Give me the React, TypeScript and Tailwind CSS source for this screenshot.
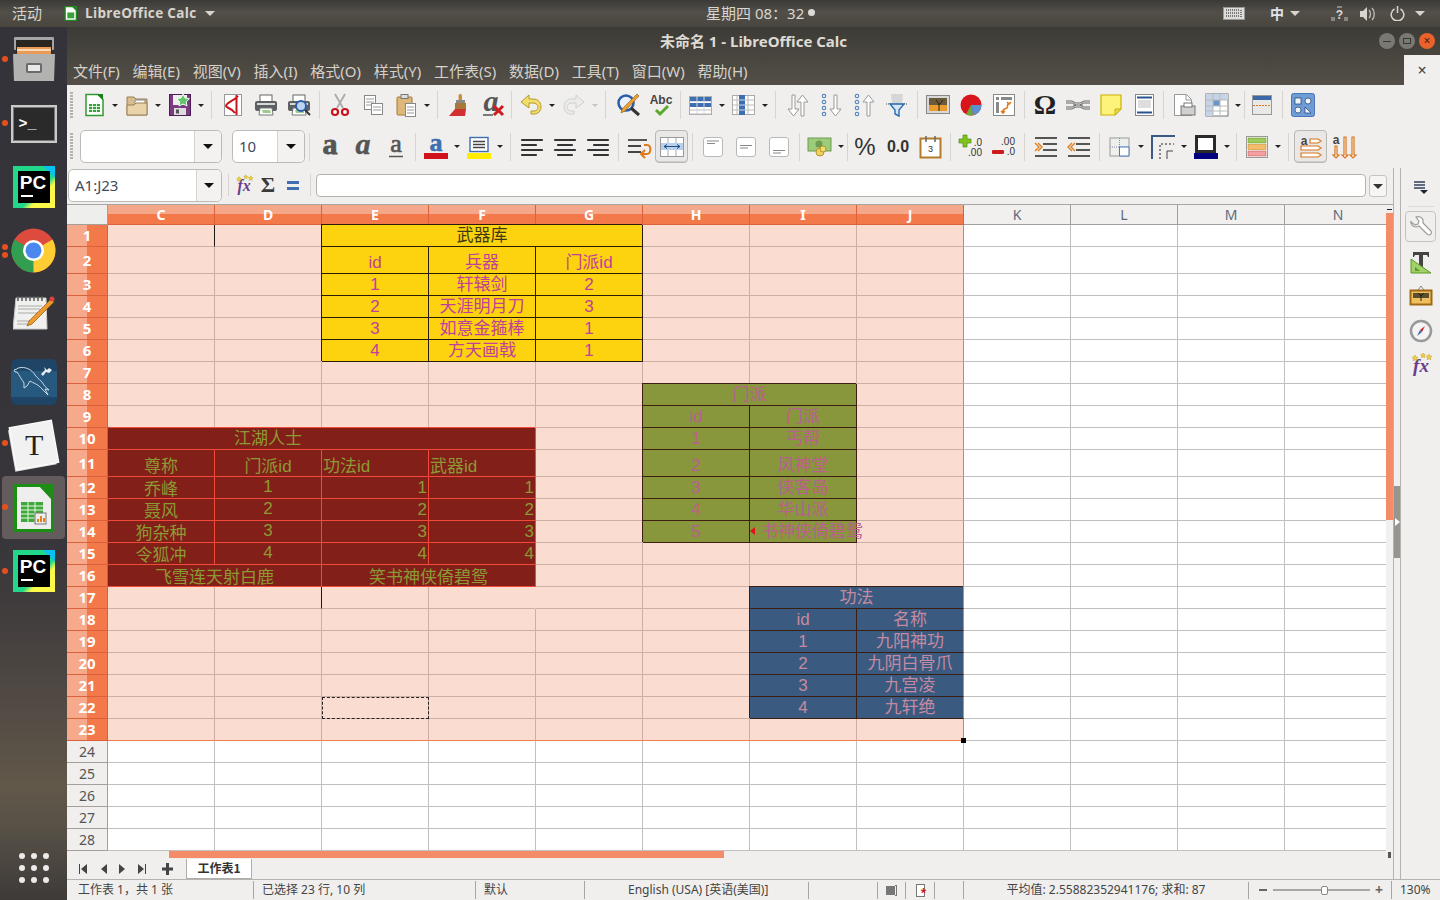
import { ReactNode } from "react";

const Svg = ({ s = 24, v = 24, children }: { s?: number; v?: number; children: ReactNode }) => (
  <svg width={s} height={s} viewBox={`0 0 ${v} ${v}`} className="block shrink-0 overflow-visible">
    {children}
  </svg>
);

const lines = (x1: number, x2: number, ys: number[], c = "#999", w = 1) => (
  <path d={ys.map((y) => `M${x1} ${y}H${x2}`).join("")} stroke={c} strokeWidth={w} fill="none" />
);

const printer = (
  <>
    <rect x="6" y="2" width="12" height="7" fill="#fff" stroke="#666" />
    <rect x="1" y="8" width="22" height="10" rx="2" fill="#5c6062" />
    <rect x="3" y="10" width="18" height="2" fill="#d8d8d8" />
    <path d="M6 15h12l1 7H5z" fill="#fff" stroke="#777" />
    <path d="M8 17h8l1 3H9z" fill="#9ccc8c" />
  </>
);

const arrowDown = "M6 2h3v14h4l-5.5 7L2 16h4z";
const arrowUp = "M6 23h3V9h4L7.5 2 2 9h4z";
const dots = (
  <g fill="#fff" stroke="#5a88bd" strokeWidth="1.2">
    {[3, 9, 15, 21].map((y) => (
      <circle key={y} cx="5" cy={y} r="1.7" />
    ))}
  </g>
);

const letter = (extra: object) => (
  <text x="12" y="19" fontSize="30" textAnchor="middle" fontFamily="Liberation Serif" fontWeight="bold" fill="#555" {...extra}>
    a
  </text>
);

const ic: Record<string, ReactNode> = {
  newDoc: (
    <>
      <path d="M4 1.5h12l5 5v16H4z" fill="#fff" stroke="#2f9a2f" strokeWidth="1.5" />
      <path d="M15 1h6v6z" fill="#1b7f1b" />
      <path d="M7 11h11v8H7z" fill="#3aa13a" />
      <path d="M7 13.5h11M7 16.5h11M10.5 11v8M14.5 11v8" stroke="#fff" strokeWidth=".8" />
    </>
  ),
  open: (
    <>
      <path d="M2 4h7l2 2h11v16H2z" fill="#d9bd8f" stroke="#9a7f55" />
      <path d="M10 7h10v7H10z" fill="#fff" stroke="#888" />
      <path d="M2 12h7l2-2h11v12H2z" fill="#e8d3ab" stroke="#9a7f55" />
    </>
  ),
  save: (
    <>
      <rect x="1.5" y="1.5" width="21" height="21" fill="#7b3a82" stroke="#4b1e54" />
      <rect x="5" y="2" width="14" height="10" fill="#eee" />
      <rect x="6" y="15" width="12" height="7" fill="#ddd" />
      <rect x="8" y="16.5" width="3" height="4" fill="#555" />
      <path d="M15 1l2 4 4.4.7-3.200 3 .8 4.3-4-2-4 2 .8-4.3-3.200-3 4.400-.7z" fill="#62c46a" stroke="#e8fbe8" />
    </>
  ),
  pdf: (
    <>
      <rect x="3.5" y="1.5" width="17" height="21" fill="#fff" stroke="#999" />
      <path d="M17 3C14 7 5 10 5 13c0 2 6 2 9 7M15.5 2v20" fill="none" stroke="#c8141c" strokeWidth="2" />
    </>
  ),
  print: printer,
  preview: (
    <>
      {printer}
      <circle cx="14" cy="13" r="5" fill="#bcd5ee" stroke="#2a5ca8" strokeWidth="2" />
      <path d="M18 17l5 5" stroke="#333" strokeWidth="2" />
    </>
  ),
  cut: (
    <>
      <path d="M7 1l8 14M17 1L9 15" stroke="#aaa" strokeWidth="1.8" />
      <circle cx="7" cy="19" r="3" fill="#fff" stroke="#c8141c" strokeWidth="2.2" />
      <circle cx="17" cy="19" r="3" fill="#fff" stroke="#c8141c" strokeWidth="2.2" />
    </>
  ),
  copy: (
    <>
      <rect x="3.5" y="2.5" width="11" height="14" fill="#fff" stroke="#888" />
      {lines(5, 13, [6, 9, 12])}
      <rect x="10.5" y="10.5" width="11" height="11" fill="#fff" stroke="#888" />
      {lines(12, 20, [14, 17])}
    </>
  ),
  paste: (
    <>
      <rect x="3" y="4" width="15" height="18" rx="1" fill="#deb77a" stroke="#a87a33" />
      <rect x="7" y="1.5" width="7" height="4" fill="#ddd" stroke="#777" />
      <rect x="11.5" y="10.5" width="10" height="13" fill="#fff" stroke="#888" />
      {lines(13, 20, [14, 17, 20])}
    </>
  ),
  brush: (
    <>
      <rect x="10.5" y="1" width="3.5" height="7" rx="1.5" fill="#c8903a" />
      <rect x="8" y="7" width="9" height="3" fill="#888" />
      <path d="M7 10h11v6H7z" fill="#a9773a" />
      <path d="M1 23l6-7h11l-1 7z" fill="#d23030" />
    </>
  ),
  clear: (
    <>
      {letter({ fontStyle: "italic", x: 10, y: 18 })}
      <path d="M2 22h10" stroke="#555" strokeWidth="1.5" />
      <path d="M13 13l9 9M22 13l-9 9" stroke="#d01c1c" strokeWidth="3" />
    </>
  ),
  undo: <path d="M2 9l8-7v4h4c6 0 8 4 8 8s-3 7-7 7h-3v-3h3c3 0 4-2 4-4s-2-4-5-4h-4v5z" fill="#f2de6c" stroke="#b49a28" />,
  redo: <path d="M22 9l-8-7v4h-4c-6 0-8 4-8 8s3 7 7 7h3v-3H9c-3 0-4-2-4-4s2-4 5-4h4v5z" fill="#ececec" stroke="#cfcfcf" />,
  find: (
    <>
      <circle cx="10" cy="10" r="7.5" fill="#e8f0fa" stroke="#2a5ca8" strokeWidth="2.5" />
      <path d="M15 15l8 7" stroke="#333" strokeWidth="3" />
      <path d="M21 1l2 2L9 18l-4 2 1-4z" fill="#f0a030" stroke="#8a5a10" strokeWidth=".6" />
    </>
  ),
  spell: (
    <>
      <text x="12" y="11" textAnchor="middle" fontSize="12" fontWeight="bold" fontFamily="Liberation Sans" fill="#444">
        Abc
      </text>
      <path d="M7 17l4 4 8-8" stroke="#5aaa2a" strokeWidth="3" fill="none" />
    </>
  ),
  rows: (
    <>
      <rect x=".5" y="3.5" width="22" height="18" fill="#fff" stroke="#aaa" />
      {lines(1, 22, [4, 8, 13, 17, 21], "#bbb")}
      <rect x="1" y="4" width="21" height="4" fill="#3d6fb0" />
      <rect x="1" y="10" width="21" height="4" fill="#3d6fb0" />
      <path d="M8 3v18M15 3v18" stroke="#cfd8e4" />
    </>
  ),
  cols: (
    <>
      <rect x=".5" y="2.5" width="22" height="19" fill="#fff" stroke="#aaa" />
      <path d="M5 3v18M16 3v18M1 7h21M1 12h21M1 17h21" stroke="#bbb" />
      <rect x="7" y="2" width="6" height="20" fill="#3d6fb0" />
      <path d="M7 7h6M7 12h6M7 17h6" stroke="#cfd8e4" />
    </>
  ),
  sort: (
    <>
      <path d={arrowDown} fill="#fff" stroke="#999" />
      <g transform="translate(9 0)">
        <path d={arrowUp} fill="#fff" stroke="#999" />
      </g>
    </>
  ),
  asc: (
    <>
      {dots}
      <g transform="translate(9 0)">
        <path d={arrowDown} fill="#fff" stroke="#999" />
      </g>
    </>
  ),
  desc: (
    <>
      {dots}
      <g transform="translate(9 0)">
        <path d={arrowUp} fill="#fff" stroke="#999" />
      </g>
    </>
  ),
  filter: (
    <>
      <path d="M6 1h12l-1 9H7z" fill="#ccc" opacity=".7" />
      <path d="M1 11h22" stroke="#555" strokeDasharray="1 1" />
      <path d="M5 11h14l-5 6v6l-4-2v-4z" fill="#d7e6f5" stroke="#2a6cb0" strokeWidth="1.4" />
    </>
  ),
  image: (
    <>
      <rect x=".5" y="2.5" width="23" height="18" fill="#d8d8d8" stroke="#888" />
      <rect x="3" y="5" width="18" height="7" fill="#6b5a3a" />
      <rect x="3" y="12" width="18" height="6" fill="#ea9c2e" />
      <path d="M13 18V11l-3-4M13 12l4-5" stroke="#2c2010" fill="none" />
    </>
  ),
  chart: (
    <>
      <circle cx="12" cy="12" r="10.5" fill="#d9141c" />
      <path d="M12 12L22.5 12A10.5 10.5 0 0 1 14 22.3z" fill="#5c8fd0" />
      <path d="M12 12l2 10.3A10.5 10.5 0 0 1 7 21.300z" fill="#6aa83a" />
    </>
  ),
  pivot: (
    <>
      <rect x="1.5" y="1.5" width="21" height="21" fill="#fff" stroke="#888" />
      <rect x="4" y="4" width="3" height="3" fill="#888" />
      <rect x="9" y="4" width="11" height="3" fill="#888" />
      <rect x="4" y="9" width="3" height="11" fill="#888" />
      <path d="M11 20c-1-5 3-4 4-5s0-3 1-4M15 9l2 2 2-2M9 18l2 2 2-2" fill="none" stroke="#e07a1c" strokeWidth="1.6" />
    </>
  ),
  omega: (
    <text x="12" y="21" fontSize="28" textAnchor="middle" fontFamily="Liberation Serif" fontWeight="bold" fill="#222">
      Ω
    </text>
  ),
  link: <path d="M0 10h7l3 2-3 2H0M24 10h-7l-3 2 3 2h7M0 8h6l4 2h4l4-2h6M0 16h6l4-2h4l4 2h6M7 12h10" stroke="#666" fill="none" />,
  note: (
    <>
      <path d="M2 2h20v14l-6 6H2z" fill="#fdf27a" stroke="#c9b200" strokeWidth="1.2" />
      <path d="M16 22v-6h6z" fill="#e8d85a" stroke="#c9b200" />
    </>
  ),
  header: (
    <>
      <rect x="3.5" y="1.5" width="18" height="21" fill="#fff" stroke="#888" />
      <rect x="5" y="3.5" width="15" height="2" fill="#2a5590" />
      {lines(6, 19, [8, 10, 12, 14], "#bbb")}
      <rect x="5" y="18.5" width="15" height="2" fill="#2a5590" />
    </>
  ),
  printArea: (
    <>
      <path d="M2.5 1.5h12l5 5v16h-17z" fill="#fff" stroke="#999" />
      <path d="M14 2v5h5" fill="none" stroke="#999" />
      <rect x="9" y="13" width="14" height="9" fill="#cfcfcf" stroke="#777" />
      <rect x="12" y="10" width="8" height="4" fill="#fff" stroke="#777" />
    </>
  ),
  freeze: (
    <>
      <rect x="1" y="1" width="22" height="22" fill="#fff" stroke="#777" />
      <path d="M1 1h22v6H8v16H1z" fill="#c5d4e6" />
      <rect x="8" y="7" width="7" height="6" fill="#6a96cc" />
      <path d="M1 7h22M1 13h22M1 18h22M8 1v22M15 1v22" stroke="#bbb" />
    </>
  ),
  split: (
    <>
      <rect x="2.5" y="2.5" width="19" height="19" fill="#e8e8e6" stroke="#999" />
      <rect x="3" y="3" width="18" height="4" fill="#3c68a8" />
      <path d="M3 12.5h18" stroke="#e07a1c" strokeDasharray="2 1" />
    </>
  ),
  styles: (
    <>
      <rect x=".5" y=".5" width="23" height="23" rx="2" fill="#6f9bd6" stroke="#4a77b5" />
      <rect x="4" y="5" width="6" height="6" fill="#eef4fb" stroke="#1f3b66" strokeWidth=".7" />
      <circle cx="17" cy="8" r="3" fill="#eef4fb" stroke="#1f3b66" strokeWidth=".7" />
      <circle cx="7" cy="17" r="3" fill="#eef4fb" stroke="#1f3b66" strokeWidth=".7" />
      <path d="M14 20v-6l6 6z" fill="#eef4fb" stroke="#1f3b66" strokeWidth=".7" />
    </>
  ),
  bold: letter({ stroke: "#555", strokeWidth: ".9" }),
  italic: letter({ fontStyle: "italic", stroke: "#555", strokeWidth: ".5" }),
  under: (
    <>
      {letter({ y: 17, fontSize: 26, fontWeight: "normal", stroke: "#555", strokeWidth: ".7" })}
      <path d="M5 21.5h14" stroke="#555" strokeWidth="1.5" />
    </>
  ),
  fontColor: (
    <>
      {letter({ y: 16, fontSize: 26, fill: "#3d6fb0", stroke: "#3d6fb0", strokeWidth: ".6" })}
      <rect x="0" y="18" width="24" height="6" fill="#d0121c" />
    </>
  ),
  bgColor: (
    <>
      <rect x="3" y="2.5" width="18" height="14" fill="#fff" stroke="#3d6fb0" strokeWidth="1.4" />
      {lines(6, 18, [6.5, 9.5, 12.5], "#444", 1.5)}
      <rect x="0" y="18" width="24" height="6" fill="#ffec00" />
    </>
  ),
  left: <path d="M2 5h20M2 10h14M2 15h20M2 20h14" stroke="#333" strokeWidth="2.2" strokeLinecap="round" />,
  center: <path d="M2 5h20M5 10h14M2 15h20M5 20h14" stroke="#333" strokeWidth="2.2" strokeLinecap="round" />,
  right: <path d="M2 5h20M8 10h14M2 15h20M8 20h14" stroke="#333" strokeWidth="2.2" strokeLinecap="round" />,
  wrap: (
    <>
      {lines(1, 20, [5], "#444", 1.8)}
      {lines(1, 14, [11, 17], "#444", 1.8)}
      <path d="M17 10h3c5 0 4 9 0 9h-5M18 15l-4 4 4 4" fill="none" stroke="#dd7a1e" strokeWidth="2" />
    </>
  ),
  merge: (
    <>
      <rect x=".5" y="2.5" width="23" height="19" fill="#fff" stroke="#999" />
      <rect x="1" y="8" width="22" height="7" fill="#b8d0ea" />
      <path d="M8 3v5M16 3v5M8 15v6M16 15v6" stroke="#aaa" />
      <path d="M4 11.5h16M7 9.5l-3 2 3 2M17 9.5l3 2-3 2" fill="none" stroke="#204f88" />
    </>
  ),
  vtop: (
    <>
      <rect x="2.5" y="2.5" width="19" height="19" rx="2.5" fill="#fff" stroke="#b8b8b8" />
      {lines(6, 18, [6], "#888")}
      {lines(6, 14, [8.5], "#888")}
    </>
  ),
  vmid: (
    <>
      <rect x="2.5" y="2.5" width="19" height="19" rx="2.5" fill="#fff" stroke="#b8b8b8" />
      {lines(6, 18, [10.5], "#888")}
      {lines(6, 14, [13], "#888")}
    </>
  ),
  vbot: (
    <>
      <rect x="2.5" y="2.5" width="19" height="19" rx="2.5" fill="#fff" stroke="#b8b8b8" />
      {lines(6, 18, [15.5], "#888")}
      {lines(6, 14, [18], "#888")}
    </>
  ),
  money: (
    <>
      <rect x="0" y="3" width="23" height="13" fill="#9ccc7c" stroke="#6f9c52" />
      <circle cx="11" cy="9" r="3.5" fill="#6f9c52" />
      <circle cx="12" cy="17" r="4" fill="#f0d060" stroke="#b49628" />
      <circle cx="15" cy="14" r="3" fill="#f4dc74" stroke="#b49628" />
    </>
  ),
  percent: (
    <text x="12" y="20" fontSize="24" textAnchor="middle" fontFamily="Liberation Sans" fill="#333">
      %
    </text>
  ),
  number: (
    <text x="12" y="17" fontSize="16" textAnchor="middle" fontFamily="Liberation Sans" fontWeight="bold" fill="#333">
      0.0
    </text>
  ),
  date: (
    <>
      <rect x="1.5" y="3.5" width="20" height="19" fill="#fff" stroke="#b47c28" strokeWidth="2" />
      <path d="M7 1v6M16 1v6" stroke="#666" strokeWidth="1.5" />
      <text x="11.5" y="17" fontSize="9" textAnchor="middle" fontFamily="Liberation Sans" fill="#333">
        3
      </text>
    </>
  ),
  addDec: (
    <>
      <path d="M4 0h4v4h4v4H8v4H4V8H0V4h4z" fill="#7fc41c" stroke="#4a8c10" strokeWidth=".7" />
      <text x="19" y="11" fontSize="10" textAnchor="middle" fontFamily="Liberation Sans" fill="#333">
        .0
      </text>
      <text x="16" y="21" fontSize="10" textAnchor="middle" fontFamily="Liberation Sans" fill="#333">
        .00
      </text>
    </>
  ),
  remDec: (
    <>
      <text x="16" y="10" fontSize="10" textAnchor="middle" fontFamily="Liberation Sans" fill="#333">
        .00
      </text>
      <rect x="0" y="15" width="12" height="4" rx="1" fill="#cf1a1a" />
      <text x="19" y="20" fontSize="10" textAnchor="middle" fontFamily="Liberation Sans" fill="#333">
        .0
      </text>
    </>
  ),
  indent: (
    <>
      {lines(1, 23, [3, 21], "#555", 1.8)}
      {lines(9, 23, [9, 15], "#555", 1.8)}
      <path d="M1 8l4 4-4 4M4 8l4 4-4 4" fill="none" stroke="#e08020" strokeWidth="1.4" />
    </>
  ),
  outdent: (
    <>
      {lines(1, 23, [3, 21], "#555", 1.8)}
      {lines(9, 23, [9, 15], "#555", 1.8)}
      <path d="M8 8l-4 4 4 4M5 8l-4 4 4 4" fill="none" stroke="#e08020" strokeWidth="1.4" />
    </>
  ),
  border: (
    <>
      <rect x="2" y="3" width="19" height="18" fill="#eef0ee" stroke="#999" />
      <path d="M11.5 3v18M2 12h19" stroke="#88a" strokeDasharray="1 1" />
      <path d="M11.5 12h9.5v9h-9.5z" fill="#fff" stroke="#4a7ab5" />
    </>
  ),
  borderStyle: (
    <>
      <path d="M1 24V1h23" fill="none" stroke="#3a5a86" strokeWidth="2" />
      <path d="M9 24V9h14" fill="none" stroke="#222" strokeDasharray="2 2" />
      <path d="M16 24v-8h6" fill="none" stroke="#444" />
    </>
  ),
  borderColor: (
    <>
      <rect x="2.5" y="1.5" width="18" height="15" fill="#fff" stroke="#2a2a2a" strokeWidth="3" />
      <rect x="0" y="18" width="24" height="6" fill="#00007f" />
    </>
  ),
  cond: (
    <>
      <rect x="1.5" y="1.5" width="21" height="21" fill="#fff" stroke="#999" />
      <rect x="3" y="3" width="18" height="5" fill="#9ecb5c" stroke="#6a9a2c" strokeWidth=".6" />
      <rect x="3" y="9.5" width="18" height="5" fill="#f5bd6a" stroke="#cc8a2c" strokeWidth=".6" />
      <rect x="3" y="16" width="18" height="5" fill="#f2a0a0" stroke="#c85a5a" strokeWidth=".6" />
    </>
  ),
  ltr: (
    <>
      <text x="5" y="10" fontSize="12" fontWeight="bold" textAnchor="middle" fontFamily="Liberation Sans" fill="#444">
        a
      </text>
      <path d="M11 4h8l3 2-3 2h-8zM2 11h17l3 2-3 2H2zM2 18h17l3 2-3 2H2z" fill="#fff" stroke="#d8741c" strokeWidth="1.2" />
    </>
  ),
  ttb: (
    <>
      <text x="4" y="9" fontSize="12" fontWeight="bold" textAnchor="middle" fontFamily="Liberation Sans" fill="#444">
        a
      </text>
      <path d="M3 11h2v9h2l-3 3-3-3h2zM12 2h2v18h2l-3 3-3-3h2zM20 2h2v18h2l-3 3-3-3h2z" fill="#fff" stroke="#d8741c" strokeWidth="1.2" />
    </>
  ),
  wrench: <path d="M2 7l4 3 3-1 1-3-3-4c3-1 6 0 7 3l0 3 8 8c1 2 0 4-2 4l-2-1-8-8-3 1c-3 0-6-3-5-6z" fill="#fff" stroke="#9a9a9a" strokeWidth="1.2" />,
  charStyle: (
    <>
      <path d="M4 2h16v5h-1l-1-2h-4v14h-4V5H6L5 7H4z" fill="#444" />
      <path d="M2 9l20 14H2z" fill="#9fd06a" stroke="#5c9a22" />
      <path d="M6 17l5 4H6z" fill="#5c9a22" />
    </>
  ),
  gallery: (
    <>
      <path d="M9 6l3-4 3 4" fill="none" stroke="#888" />
      <rect x="1.5" y="6.5" width="21" height="14" fill="#f0c060" stroke="#a06a14" strokeWidth="2" />
      <rect x="4" y="9" width="16" height="5" fill="#5a5030" />
      <path d="M12 17v-7M12 12l-3-3M12 12l3-3" stroke="#2c2010" />
    </>
  ),
  compass: (
    <>
      <circle cx="12" cy="12" r="10" fill="#f4f4f4" stroke="#999" strokeWidth="2.5" />
      <path d="M16 7l-3 6-2-2z" fill="#d02020" />
      <path d="M8 17l3-6 2 2z" fill="#3a6cb5" />
    </>
  ),
  fx: (
    <>
      <text x="12" y="20" fontSize="19" textAnchor="middle" fontFamily="Liberation Serif" fontStyle="italic" fontWeight="bold" fill="#6a3d8c">
        fx
      </text>
      <path d="M6 3l1 2 2 .3-1.500 1.500.4 2-1.900-1-1.900 1 .4-2L3 5.300 5 5zM14 1l.8 1.500 1.700.3-1.200 1.200.3 1.700-1.600-.8-1.500.8.3-1.700-1.200-1.200 1.700-.3zM20 2l1 2 2 .3-1.500 1.500.4 2-1.900-1-1.900 1 .4-2L17 4.300 19 4z" fill="#f0d040" stroke="#b09010" strokeWidth=".4" />
    </>
  ),
  sidebarMenu: (
    <>
      {lines(6, 17, [7, 10, 13], "#33405a", 1.5)}
      <path d="M12 15h8l-4 4z" fill="#1c2638" />
    </>
  ),
};

const Btn = ({ i, on }: { i: string; on?: boolean }) => (
  <div
    className={
      on
        ? "w-[33px] h-[33px] shrink-0 flex items-center justify-center rounded-[4px] border border-[#b9b7b4] bg-[#e9e8e6] shadow-[inset_0_-1px_0_#d0cecb]"
        : "w-[33px] h-[33px] shrink-0 flex items-center justify-center"
    }
  >
    <Svg>{ic[i]}</Svg>
  </div>
);

const Arr = ({ off }: { off?: boolean }) => (
  <div className="w-[10px] shrink-0 flex items-center justify-center">
    <div
      className={
        off
          ? "w-0 h-0 border-x-[3.5px] border-t-[3.5px] border-x-transparent border-t-[#c4c4c4]"
          : "w-0 h-0 border-x-[3.5px] border-t-[3.5px] border-x-transparent border-t-[#222]"
      }
    />
  </div>
);

const Sep = ({ w }: { w: string }) => (
  <div className={`${w} shrink-0 flex items-center justify-center`}>
    <div className="w-px h-[28px] bg-[#d6d4d1]" />
  </div>
);

const Grip = ({ cn }: { cn: string }) => <div className={`w-[3px] h-[27px] shrink-0 bg-[repeating-linear-gradient(180deg,#b4b2af_0_2px,transparent_2px_3px)] ${cn}`} />;

const Combo = ({ w, left, text, div }: { w: string; left: string; text?: string; div: string }) => (
  <div className={`${w} ${left} h-[33px] shrink-0 flex rounded-[5px] border border-[#bdbbb8] bg-white`}>
    <div className={`${div} h-full flex items-center pl-[6px] text-[15px] text-[#3f4a5a]`}>{text}</div>
    <div className="flex-1 h-full flex items-center justify-center border-l border-[#d4d2cf] rounded-r-[5px] bg-[#f3f2f1]">
      <div className="w-0 h-0 border-x-[5px] border-t-[5px] border-x-transparent border-t-[#111]" />
    </div>
  </div>
);

const TopBar = () => (
  <div className="h-[27px] flex items-center bg-[linear-gradient(180deg,#3b3a37,#524f49_45%,#494640)] text-[15px] text-[#d8d4ce]">
    <div className="w-[706px] shrink-0 flex items-center pl-[12px]">
      <span className="w-[52px]">活动</span>
      <svg width="13" height="15" viewBox="0 0 24 28" className="block">
        <path d="M2 1h14l7 7v19H2z" fill="#fff" stroke="#1f8a1f" strokeWidth="2.5" />
        <path d="M16 0h8v8z" fill="#1f8a1f" />
        <rect x="6" y="12" width="13" height="11" fill="#3aa13a" />
      </svg>
      <span className="ml-[8px] w-[116px] font-bold text-[13.5px] tracking-[0.35px] font-['Open_Sans',sans-serif] whitespace-nowrap">LibreOffice Calc</span>
      <div className="ml-[4px] w-0 h-0 border-x-[5px] border-t-[5px] border-x-transparent border-t-[#d8d4ce]" />
    </div>
    <span className="whitespace-nowrap">星期四 08：32</span>
    <span className="ml-[4px] w-[7px] h-[7px] mb-[3px] rounded-full bg-[#dcdad6]" />
    <div className="ml-auto flex items-center pr-[15px]">
      <svg width="22" height="13" viewBox="0 0 22 13" className="block">
        <rect x=".5" y=".5" width="21" height="12" fill="#dedcd8" stroke="#999" />
        <path d="M3 3h13M3 6h13M3 9h13M18 3v7" stroke="#555" strokeWidth="1.5" strokeDasharray="1 1" />
      </svg>
      <span className="ml-[25px] font-bold text-[14px] text-[#dfe3ea] leading-none">中</span>
      <div className="ml-[6px] w-0 h-0 border-x-[5px] border-t-[5px] border-x-transparent border-t-[#d8d4ce]" />
      <svg width="17" height="15" viewBox="0 0 17 15" className="ml-[31px] block overflow-visible">
        <path d="M0 11h4v4H0zM6 0h5v2H6zM13 11h4v4h-4z" fill="#8a8781" />
        <text x="8.5" y="13" fontSize="12" fontWeight="bold" textAnchor="middle" fontFamily="Liberation Sans" fill="#dcdad6">
          ?
        </text>
      </svg>
      <svg width="16" height="14" viewBox="0 0 16 14" className="ml-[12px] block">
        <path d="M0 4h3l4-4v14l-4-4H0z" fill="#d8d4ce" />
        <path d="M9 3c2 2 2 6 0 8M12 1c3 3 3 9 0 12" fill="none" stroke="#bdb9b2" strokeWidth="1.4" />
      </svg>
      <svg width="15" height="15" viewBox="0 0 15 15" className="ml-[14px] block">
        <path d="M4.5 3a6.300 6.300 0 1 0 6 0M7.5 0v7" fill="none" stroke="#d8d4ce" strokeWidth="1.5" />
      </svg>
      <div className="ml-[10px] w-0 h-0 border-x-[5px] border-t-[5px] border-x-transparent border-t-[#d8d4ce]" />
    </div>
  </div>
);

const PCLogo = () => (
  <svg width="42" height="42" viewBox="0 0 42 42" className="block">
    <defs>
      <linearGradient id="pcg" x1="0" y1="0" x2="1" y2="1">
        <stop offset="0" stopColor="#21d789" />
        <stop offset=".6" stopColor="#21d789" />
        <stop offset=".7" stopColor="#fcf84a" />
      </linearGradient>
    </defs>
    <rect width="42" height="42" fill="url(#pcg)" />
    <path d="M30 0h12v12z" fill="#07c3f2" />
    <rect x="5" y="5" width="32" height="32" fill="#000" />
    <text x="20" y="23" fontSize="19" fontWeight="bold" textAnchor="middle" fontFamily="Liberation Sans" fill="#fff">
      PC
    </text>
    <rect x="8" y="29" width="12" height="2" fill="#fff" />
  </svg>
);

const CalcLogo = () => (
  <svg width="40" height="48" viewBox="0 0 40 48" className="block">
    <path d="M1.5 1.5h25l12 13v32h-37z" fill="#eeeeee" stroke="#1b8f12" strokeWidth="3" />
    <path d="M27 0h13v13z" fill="#1b8f12" />
    <rect x="7" y="18" width="22" height="20" fill="#3fa83a" />
    <path d="M7 22h22M7 26h22M7 30h22M7 34h22M14 18v20M21 18v20" stroke="#e8f7e6" />
    <rect x="21" y="29" width="11" height="11" fill="#eee" stroke="#777" />
    <path d="M24 38v-3M27 38v-6M30 38v-4" stroke="#e08020" strokeWidth="2" />
  </svg>
);

const Dot = ({ t }: { t: string }) => <span className={`absolute left-[2px] w-[6px] h-[6px] rounded-full bg-[#e6501f] ${t}`} />;

const Dock = () => (
  <div className="w-[67px] shrink-0 flex flex-col bg-[linear-gradient(180deg,#343339_0,#37353a_58%,#403c3d_66%,#4f4843_76%,#615849_87%,#565046_92%,#3e3a38_100%)]">
    <div className="relative h-[71px] flex justify-center pt-[10px]">
      <Dot t="top-[29px]" />
      <svg width="42" height="44" viewBox="0 0 42 44" className="block">
        <rect x="1" y="0" width="40" height="13" rx="1" fill="#a5a5a5" />
        <rect x="3" y="3" width="36" height="13" fill="#28241f" />
        <rect x="4" y="10" width="34" height="7" fill="#ea9a55" />
        <rect x="4" y="12" width="34" height="2" fill="#f6d9b6" />
        <path d="M0 17h42l-1 27H1z" fill="#b2b2b0" />
        <rect x="13" y="26" width="16" height="10" rx="2" fill="#6b6b6b" />
        <rect x="15" y="28" width="12" height="6" fill="#e9e9e9" />
      </svg>
    </div>
    <div className="relative h-[63px] flex items-center justify-center pb-[11px]">
      <Dot t="top-[22px]" />
      <div className="w-[46px] h-[38px] border-[2px] border-[#c9c9c9] bg-[#2a2a2a] shadow-[inset_0_0_0_1px_#777] flex items-center pl-[6px] text-[15px] font-bold text-white font-['Liberation_Mono',monospace] leading-none">
        &gt;_
      </div>
    </div>
    <div className="h-[63px] flex items-center justify-center pb-[11px]">
      <PCLogo />
    </div>
    <div className="relative h-[63px] flex items-center justify-center pb-[11px]">
      <Dot t="top-[20px]" />
      <Dot t="top-[28px]" />
      <svg width="45" height="45" viewBox="0 0 45 45" className="block">
        <circle cx="22.5" cy="22.5" r="22" fill="#dd4b3e" />
        <path d="M22.5 22.5L3.5 33.5A22 22 0 0 1 3.5 11.5z" fill="#319f4f" />
        <path d="M22.5 22.5L22.5 44.5A22 22 0 0 1 3.5 33.5z" fill="#319f4f" />
        <path d="M22.5 22.5L41.5 11.5A22 22 0 0 1 22.5 44.5z" fill="#fdcd33" />
        <circle cx="22.5" cy="22.5" r="10.5" fill="#fff" />
        <circle cx="22.5" cy="22.5" r="8" fill="#4a87ee" />
      </svg>
    </div>
    <div className="h-[63px] flex items-center justify-center pb-[11px]">
      <svg width="42" height="37" viewBox="0 0 42 37" className="block">
        <path d="M3 3h30l1 31H0z" fill="#f0f0ee" stroke="#ccc" />
        <path d="M5 1v5M9 1v5M13 1v5M17 1v5M21 1v5M25 1v5M29 1v5" stroke="#555" strokeWidth="1.5" />
        <path d="M5 11h24M5 14h22M5 18h20M4 26h14M4 29h14" stroke="#aaa" />
        <path d="M38 4l3 3-22 22-5 2 2-5z" fill="#ef9a2e" stroke="#8a5a10" strokeWidth=".7" />
        <circle cx="39" cy="4" r="2.5" fill="#d8443a" />
      </svg>
    </div>
    <div className="h-[63px] flex items-center justify-center">
      <svg width="46" height="46" viewBox="0 0 46 46" className="block">
        <rect width="46" height="46" rx="6" fill="#1e4466" />
        <rect y="12" width="46" height="26" fill="#27587e" />
        <path d="M7 9c8-2 14 2 17 7 3 4 6 5 9 10 1 2 3 3 5 5l-4-1 3 6-6-6c-4-5-9-6-12-8l-3 5-3 2 0-5c-2-3-5-8-7-11l-2 0-1-2 3-1z" fill="none" stroke="#d9e6f0" strokeWidth=".9" />
        <path d="M33 8l3 3 2-2 3 2-3 3-3-1-3 4-2-2 4-4z" fill="#e8eef4" />
      </svg>
    </div>
    <div className="relative h-[63px] flex items-center justify-center">
      <Dot t="top-[27px]" />
      <div className="w-[42px] h-[42px] rotate-[-10deg] bg-[#f1f1f1] shadow-[0_0_0_1px_#fff,-2px_2px_0_0_#ddd] flex items-center justify-center">
        <span className="rotate-[10deg] text-[30px] text-[#222] font-['Liberation_Serif',serif] leading-none">T</span>
      </div>
    </div>
    <div className="relative h-[63px] mx-[2px] rounded-[4px] bg-[#625c5c] flex items-center justify-center">
      <span className="absolute left-0 top-[28px] w-[6px] h-[6px] rounded-full bg-[#e6501f]" />
      <CalcLogo />
    </div>
    <div className="relative h-[63px] flex items-center justify-center">
      <Dot t="top-[29px]" />
      <PCLogo />
    </div>
    <div className="mt-auto mb-[17px] self-center grid grid-cols-3 gap-[6px]">
      {Array.from({ length: 9 }, (_, i) => (
        <span key={i} className="w-[6px] h-[6px] rounded-full bg-[#ecebe9]" />
      ))}
    </div>
  </div>
);

const menu = ["文件(F)", "编辑(E)", "视图(V)", "插入(I)", "格式(O)", "样式(Y)", "工作表(S)", "数据(D)", "工具(T)", "窗口(W)", "帮助(H)"];

const Header = () => (
  <div className="bg-[linear-gradient(180deg,#3d3b36,#534f48)] text-[#d6d1ca]">
    <div className="h-[28px] grid grid-cols-[1fr_auto_1fr] items-center">
      <div />
      <span className="font-bold text-[15px] text-[#dedad4] whitespace-nowrap">未命名 1 - LibreOffice Calc</span>
      <div className="flex justify-end gap-[4px] pr-[5px]">
        <span className="w-[16px] h-[16px] rounded-full bg-[#7a7872] flex items-center justify-center">
          <span className="w-[8px] h-px bg-[#3a3833]" />
        </span>
        <span className="w-[16px] h-[16px] rounded-full bg-[#7a7872] flex items-center justify-center">
          <span className="w-[8px] h-[6px] border border-[#3a3833]" />
        </span>
        <span className="w-[16px] h-[16px] rounded-full bg-[#e9622c] flex items-center justify-center text-[12px] leading-none text-[#4a2410]">×</span>
      </div>
    </div>
    <div className="h-[30px] flex items-end">
      <div className="flex gap-[12.75px] pl-[6px] pb-[3px] text-[15px] leading-[22px] whitespace-nowrap">
        {menu.map((m) => (
          <span key={m}>{m}</span>
        ))}
      </div>
      <div className="ml-auto w-[36px] h-[30px] bg-[#f0efee] flex items-center justify-center text-[16px] leading-none text-[#444]">×</div>
    </div>
  </div>
);

const ToolbarOne = () => (
  <div className="h-[40px] bg-[#f0efee] flex items-center pl-[3px]">
    <Grip cn="mr-[4px]" />
    <Btn i="newDoc" />
    <Arr />
    <Btn i="open" />
    <Arr />
    <Btn i="save" />
    <Arr />
    <Sep w="w-[10px]" />
    <Btn i="pdf" />
    <Btn i="print" />
    <Btn i="preview" />
    <Sep w="w-[8px]" />
    <Btn i="cut" />
    <Btn i="copy" />
    <Btn i="paste" />
    <Arr />
    <Sep w="w-[11px]" />
    <Btn i="brush" />
    <Btn i="clear" />
    <Sep w="w-[5px]" />
    <Btn i="undo" />
    <Arr />
    <Btn i="redo" />
    <Arr off />
    <Sep w="w-[11px]" />
    <Btn i="find" />
    <Btn i="spell" />
    <Sep w="w-[7px]" />
    <Btn i="rows" />
    <Arr />
    <Btn i="cols" />
    <Arr />
    <Sep w="w-[11px]" />
    <Btn i="sort" />
    <Btn i="asc" />
    <Btn i="desc" />
    <Btn i="filter" />
    <Sep w="w-[8px]" />
    <Btn i="image" />
    <Btn i="chart" />
    <Btn i="pivot" />
    <Sep w="w-[8px]" />
    <Btn i="omega" />
    <Btn i="link" />
    <Btn i="note" />
    <Btn i="header" />
    <Sep w="w-[7px]" />
    <Btn i="printArea" />
    <Btn i="freeze" />
    <Arr />
    <Sep w="w-[2px]" />
    <Btn i="split" />
    <Sep w="w-[8px]" />
    <Btn i="styles" />
  </div>
);

const ToolbarTwo = () => (
  <div className="h-[43px] bg-[#f0efee] flex items-center pl-[3px]">
    <Grip cn="mr-[7px]" />
    <Combo w="w-[142px]" left="" div="w-[113px]" />
    <Combo w="w-[73px]" left="ml-[10px]" text="10" div="w-[44px]" />
    <Sep w="w-[8px]" />
    <Btn i="bold" />
    <Btn i="italic" />
    <Btn i="under" />
    <Sep w="w-[7px]" />
    <Btn i="fontColor" />
    <Arr />
    <Btn i="bgColor" />
    <Arr />
    <Sep w="w-[10px]" />
    <Btn i="left" />
    <Btn i="center" />
    <Btn i="right" />
    <Sep w="w-[8px]" />
    <Btn i="wrap" />
    <Btn i="merge" on />
    <Sep w="w-[8px]" />
    <Btn i="vtop" />
    <Btn i="vmid" />
    <Btn i="vbot" />
    <Sep w="w-[8px]" />
    <Btn i="money" />
    <Arr />
    <Sep w="w-[2px]" />
    <Btn i="percent" />
    <Btn i="number" />
    <Btn i="date" />
    <Sep w="w-[7px]" />
    <Btn i="addDec" />
    <Btn i="remDec" />
    <Sep w="w-[9px]" />
    <Btn i="indent" />
    <Btn i="outdent" />
    <Sep w="w-[8px]" />
    <Btn i="border" />
    <Arr />
    <Btn i="borderStyle" />
    <Arr />
    <Btn i="borderColor" />
    <Arr />
    <Sep w="w-[8px]" />
    <Btn i="cond" />
    <Arr />
    <Sep w="w-[11px]" />
    <Btn i="ltr" on />
    <Btn i="ttb" />
  </div>
);

const FormulaBar = () => (
  <div className="h-[37px] flex items-start bg-[#f0efee] border-b border-[#a8a6a2]">
    <Combo w="w-[154px]" left="ml-px mt-[1px]" text="A1:J23" div="w-[127px]" />
    <div className="w-[12px] flex justify-center mt-[6px]">
      <div className="w-px h-[22px] bg-[#d6d4d1]" />
    </div>
    <div className="w-[20px] mt-[6px]">
      <Svg s={20}>{ic.fx}</Svg>
    </div>
    <div className="w-[28px] text-center mt-[2px] text-[22px] leading-[30px] font-bold text-[#3a3a3a] font-['Liberation_Serif',serif]">Σ</div>
    <div className="w-[22px] mt-[13px] flex flex-col gap-[3px] items-center">
      <span className="w-[12px] h-[3px] bg-[#3f6fb0]" />
      <span className="w-[12px] h-[3px] bg-[#3f6fb0]" />
    </div>
    <div className="w-[13px] flex justify-center mt-[6px]">
      <div className="w-px h-[22px] bg-[#d6d4d1]" />
    </div>
    <div className="ml-[-1px] mt-[6px] w-[1050px] h-[23px] rounded-[4px] border border-[#b4b2af] bg-white" />
    <div className="ml-[3px] mt-[7px] w-[18px] h-[22px] rounded-[3px] border border-[#c6c4c1] bg-[#f6f5f4] flex items-center justify-center">
      <div className="w-0 h-0 border-x-[5px] border-t-[5px] border-x-transparent border-t-[#333]" />
    </div>
  </div>
);

type Cell = { t?: string; k?: string; span?: number; cn?: string; inner?: ReactNode };

const kinds: Record<string, string> = {
  yh: "bg-[#fdd20f] border-[#2a1a08] text-[#3c3a10] shadow-[-1px_-1px_0_0_#2a1a08]",
  y: "bg-[#fdd20f] border-[#2a1a08] text-[#bf3f9a] shadow-[-1px_-1px_0_0_#2a1a08]",
  r: "bg-[#821f18] border-[#f24a3a] text-[#8c9a34] shadow-[-1px_-1px_0_0_#f24a3a]",
  g: "bg-[#88963c] border-[#3d1f12] text-[#b9608f] shadow-[-1px_-1px_0_0_#3d1f12]",
  b: "bg-[#3b5a7f] border-[#3a1f14] text-[#c58aa2] shadow-[-1px_-1px_0_0_#3a1f14]",
};

const spans: Record<number, string> = { 1: "", 2: "col-span-2", 3: "col-span-3", 4: "col-span-4" };

const tableRow = (k: string, start: number, ts: string[]) => {
  const out: Record<number, Cell> = {};
  ts.forEach((t, i) => (out[start + i] = { t, k }));
  return out;
};

const right = "justify-end pr-[1px]";
const leftAl = "justify-start pl-[1px]";
const mid = "items-center pb-[1px]";

// the red table's Chinese cells sit a little lower than the others
const low = (t: string) => <span className="translate-y-[2px]">{t}</span>;
const low1 = (t: string) => <span className="translate-y-px">{t}</span>;

const redRow = (name: string, n: string): Record<number, Cell> => ({
  0: { inner: low(name), k: "r" },
  1: { t: n, k: "r", cn: mid },
  2: { t: n, k: "r", cn: right },
  3: { t: n, k: "r", cn: right },
});

const cells: Record<number, Record<number, Cell>> = {
  1: { 0: { cn: "border-r-[#1a1a1a]" }, 2: { t: "武器库", k: "yh", span: 3 } },
  2: tableRow("y", 2, ["id", "兵器", "门派id"]),
  3: tableRow("y", 2, ["1", "轩辕剑", "2"]),
  4: tableRow("y", 2, ["2", "天涯明月刀", "3"]),
  5: tableRow("y", 2, ["3", "如意金箍棒", "1"]),
  6: tableRow("y", 2, ["4", "方天画戟", "1"]),
  8: { 5: { t: "门派", k: "g", span: 2 } },
  9: tableRow("g", 5, ["id", "门派"]),
  10: { ...tableRow("g", 5, ["1", "丐帮"]), 0: { t: "江湖人士", k: "r", span: 4, cn: "pr-[107px]" } },
  11: {
    ...tableRow("g", 5, ["2", "风神堂"]),
    0: { inner: low1("尊称"), k: "r" },
    1: { inner: low1("门派id"), k: "r" },
    2: { inner: low1("功法id"), k: "r", cn: leftAl },
    3: { inner: low1("武器id"), k: "r", cn: leftAl },
  },
  12: { ...tableRow("g", 5, ["3", "侠客岛"]), ...redRow("乔峰", "1") },
  13: { ...tableRow("g", 5, ["4", "华山派"]), ...redRow("聂风", "2") },
  14: {
    ...redRow("狗杂种", "3"),
    5: { t: "5", k: "g" },
    6: {
      k: "g",
      cn: "relative",
      inner: (
        <>
          <span className="absolute left-0 top-[6px] w-0 h-0 border-y-[4px] border-r-[5px] border-y-transparent border-r-[#e0121c]" />
          <span className="absolute right-[-7px] bottom-0 w-[99px] overflow-hidden flex justify-end whitespace-nowrap">笑书神侠倚碧鸳</span>
        </>
      ),
    },
  },
  15: redRow("令狐冲", "4"),
  16: { 0: { inner: low("飞雪连天射白鹿"), k: "r", span: 2 }, 2: { inner: low("笑书神侠倚碧鸳"), k: "r", span: 2 } },
  17: { 1: { cn: "border-r-[#1a1a1a]" }, 3: { cn: "border-r-transparent" }, 6: { t: "功法", k: "b", span: 2 } },
  18: tableRow("b", 6, ["id", "名称"]),
  19: tableRow("b", 6, ["1", "九阳神功"]),
  20: tableRow("b", 6, ["2", "九阴白骨爪"]),
  21: tableRow("b", 6, ["3", "九宫凌"]),
  22: { ...tableRow("b", 6, ["4", "九轩绝"]), 2: { inner: <span className="absolute inset-0 bottom-[-1px] right-[-1px] border border-dashed border-[#222]" />, cn: "relative" } },
  23: { 7: { cn: "relative", inner: <span className="absolute right-[-3px] bottom-[-3px] w-[5px] h-[5px] bg-black" /> } },
};

const colNames = ["C", "D", "E", "F", "G", "H", "I", "J", "K", "L", "M", "N"];

const Sheet = () => {
  const rows = [];
  for (let r = 1; r <= 28; r++) {
    const inSel = r <= 23;
    const out = [];
    for (let c = 0; c < 12; c++) {
      const cell = cells[r]?.[c] ?? {};
      const span = cell.span ?? 1;
      const sel = inSel && c <= 7;
      const end = c + span - 1;
      out.push(
        <div
          key={c}
          className={[
            "flex items-end justify-center border-r border-b leading-[21px] whitespace-nowrap",
            spans[span],
            cell.k ? kinds[cell.k] : sel ? "bg-[#fbdcd1] border-[#cdb0a5]" : "bg-white border-[#c0c0c0]",
            sel && end === 7 ? "border-r-[#f3784a]" : "",
            sel && r === 23 ? "border-b-[#f3784a]" : "",
            cell.cn ?? "",
          ].join(" ")}
        >
          {cell.inner ?? cell.t}
        </div>,
      );
      c = end;
    }
    rows.push(
      <div key={r} className={`grid grid-cols-[41px_repeat(12,107px)] ${r === 2 || r === 11 ? "h-[27px] grid-rows-[27px]" : "h-[22px] grid-rows-[22px]"}`}>
        <div
          className={
            inSel
              ? "flex items-center justify-center border-r border-b border-[#d9623a] bg-[linear-gradient(90deg,#f7a98c_50%,#f3784a_50%)] text-white font-bold text-[15px] leading-none font-['Noto_Sans',sans-serif]"
              : "flex items-center justify-center border-r border-b border-[#a3a09c] bg-[#f0efee] text-[#555] text-[14px] leading-none font-['Noto_Sans',sans-serif]"
          }
        >
          {r}
        </div>
        {out}
      </div>,
    );
  }
  return (
    <div className="flex-1 min-w-0 overflow-hidden text-[17px] font-['Liberation_Sans','Noto_Sans_CJK_SC',sans-serif]">
      <div className="grid grid-cols-[41px_repeat(12,107px)] h-[20px] grid-rows-[20px]">
        <div className="border-r border-b border-[#a3a09c] bg-[#eeeeec]" />
        {colNames.map((n, i) => (
          <div
            key={n}
            className={
              i <= 7
                ? "flex items-center justify-center border-r border-b border-[#d9623a] bg-[linear-gradient(180deg,#f5a78a_50%,#f3784a_50%)] text-white font-bold text-[14px] leading-none font-['Noto_Sans',sans-serif]"
                : "flex items-center justify-center border-r border-b border-[#a3a09c] bg-[#f1f0ef] text-[#5b6a80] text-[14px] leading-none font-['Noto_Sans',sans-serif]"
            }
          >
            {n}
          </div>
        ))}
      </div>
      {rows}
    </div>
  );
};

const TabBar = () => (
  <div className="h-[28px] shrink-0 bg-[#f0efee]">
    <div className="h-[7px] flex items-center justify-between pl-[102px] pr-[2px]">
      <div className="w-[555px] h-[7px] bg-[#f48c68]" />
      <div className="w-[3px] h-[6px] bg-[#555]" />
    </div>
    <div className="h-[21px] flex items-center pl-[12px] text-[#333]">
      <svg width="94" height="12" viewBox="0 0 94 12" className="block shrink-0">
        <path d="M0 1h1v10H0zM2 6l6-5v10zM22 6l6-5v10zM40 1l6 5-6 5zM59 1l6 5-6 5zM66 1h1v10h-1z" fill="#444" />
        <path d="M87 0h3v4.500h4v3h-4V12h-3V7.500h-4v-3h4z" fill="#444" />
      </svg>
      <div className="ml-[13px] w-[66px] h-[20px] bg-white border-x border-b border-[#b0aeab] flex items-center justify-center text-[12px] font-bold text-[#333] font-['Noto_Sans_CJK_SC',sans-serif]">
        工作表1
      </div>
    </div>
  </div>
);

const StatusBar = () => (
  <div className="h-[21px] flex items-center border-t border-[#b5b3b0] bg-[#f0efee] text-[12px] text-[#444] whitespace-nowrap font-['Noto_Sans','Noto_Sans_CJK_SC',sans-serif]">
    <div className="w-[186px] pl-[11px]">工作表 1，共 1 张</div>
    <div className="w-[222px] pl-[8px] border-l border-[#a8a6a2]">已选择 23 行, 10 列</div>
    <div className="w-[109px] pl-[8px] border-l border-[#a8a6a2]">默认</div>
    <div className="w-[224px] pl-[43px] border-l border-[#a8a6a2]">English (USA) [英语(美国)]</div>
    <div className="w-[69px] h-[17px] border-l border-[#a8a6a2]" />
    <div className="w-[28px] h-[17px] border-l border-[#a8a6a2] flex items-center justify-center">
      <span className="w-[9px] h-[9px] bg-[#777]" />
      <span className="w-[2px] h-[11px] border-y border-r border-[#777]" />
    </div>
    <div className="w-[29px] h-[17px] border-l border-[#a8a6a2] flex items-center justify-center">
      <span className="relative w-[9px] h-[13px] border border-[#777] bg-white text-[11px] leading-[13px] text-[#c8141c] pl-[4px] font-bold">*</span>
    </div>
    <div className="w-[29px] h-[17px] border-l border-[#a8a6a2]" />
    <div className="w-[285px] text-center border-l border-[#a8a6a2]">平均值: 2.55882352941176; 求和: 87</div>
    <div className="w-[143px] h-[17px] flex items-center border-l border-[#a8a6a2] pl-[10px]">
      <span className="w-[8px] h-[2px] bg-[#666]" />
      <div className="ml-[6px] w-[97px] h-[2px] bg-[#a8a6a2] flex items-center pl-[48px]">
        <span className="w-[7px] h-[9px] bg-white border border-[#888] rounded-[2px]" />
      </div>
      <span className="ml-[5px] text-[14px] leading-none font-bold text-[#666]">+</span>
    </div>
    <div className="w-[49px] pl-[8px] border-l border-[#a8a6a2]">130%</div>
  </div>
);

const Sidebar = () => (
  <div className="w-[40px] shrink-0 bg-[#f0efee] border-l border-[#b5b3b0] flex flex-col items-center">
    <div className="h-[38px] flex items-center justify-center mr-[1px]">
      <Svg>{ic.sidebarMenu}</Svg>
    </div>
    <div className="w-[26px] h-px bg-[#dcdad7]" />
    <div className="mt-[4px] w-[31px] h-[31px] rounded-[4px] border border-[#c4c2bf] flex items-center justify-center">
      <Svg>{ic.wrench}</Svg>
    </div>
    <div className="mt-[8px]">
      <Svg>{ic.charStyle}</Svg>
    </div>
    <div className="mt-[10px]">
      <Svg>{ic.gallery}</Svg>
    </div>
    <div className="mt-[11px]">
      <Svg>{ic.compass}</Svg>
    </div>
    <div className="mt-[9px]">
      <Svg>{ic.fx}</Svg>
    </div>
  </div>
);

export default function App() {
  return (
    <div className="w-[1440px] h-[900px] flex flex-col overflow-hidden bg-[#f0efee] font-['Noto_Sans','Noto_Sans_CJK_SC',sans-serif]">
      <TopBar />
      <div className="flex-1 min-h-0 flex">
        <Dock />
        <div className="flex-1 min-w-0 flex flex-col">
          <Header />
          <ToolbarOne />
          <ToolbarTwo />
          <div className="flex-1 min-h-0 flex">
            <div className="w-[1326px] shrink-0 flex flex-col">
              <FormulaBar />
              <div className="flex-1 min-h-0 flex">
                <Sheet />
                <div className="w-[7px] shrink-0 bg-[#f1f0ee] flex flex-col">
                  <div className="h-[8px] flex items-center justify-center">
                    <span className="w-[5px] h-px bg-[#222]" />
                  </div>
                  <div className="h-[307px] bg-[#f48c68]" />
                </div>
              </div>
              <TabBar />
            </div>
            <div className="w-[7px] shrink-0 border-l border-[#b5b3b0] pt-[318px]">
              <div className="h-[72px] bg-[#989590] flex items-center justify-center">
                <div className="w-0 h-0 border-y-[4px] border-l-[5px] border-y-transparent border-l-white" />
              </div>
            </div>
            <Sidebar />
          </div>
          <StatusBar />
        </div>
      </div>
    </div>
  );
}
